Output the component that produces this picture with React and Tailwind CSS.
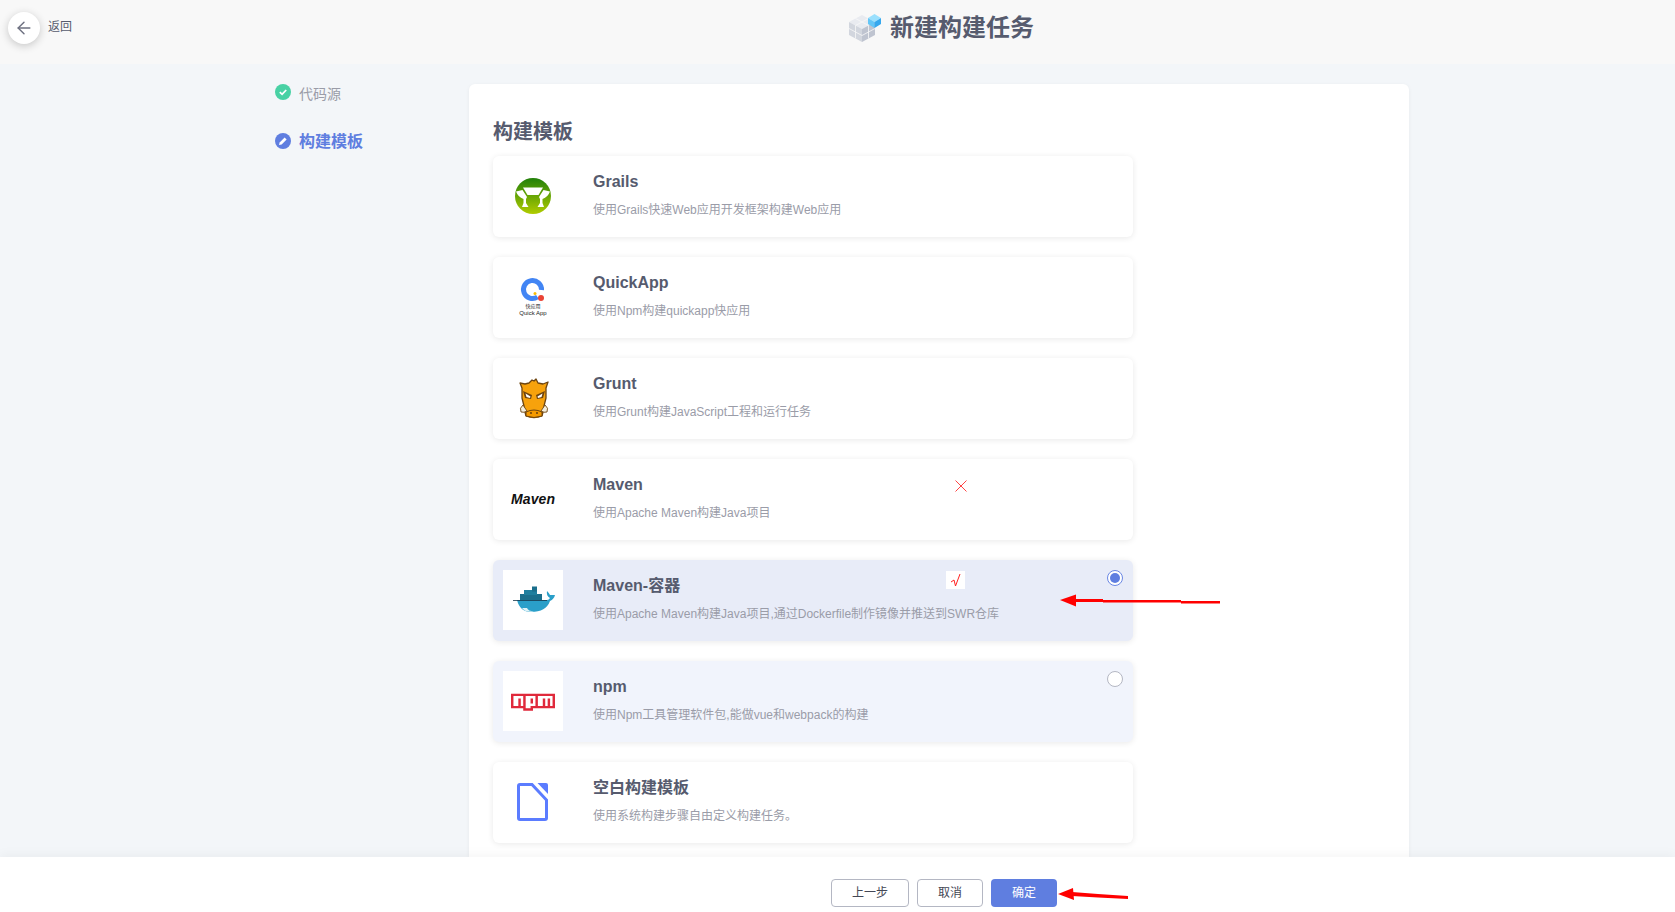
import React from "react";
import { ArrowLeft } from "lucide-react";
import { FaNpm } from "react-icons/fa";

const FONT = { fontFamily: '"Liberation Sans", "Noto Sans CJK SC", sans-serif' };

function CubeLogo() {
  return (
    <svg width="33" height="28" viewBox="0 0 33 28">
      <polygon points="0,8 13,1 26,8 13,15" fill="#e9ebf0" />
      <polygon points="0,8 13,15 13,28 0,21" fill="#d2d6de" />
      <polygon points="13,15 26,8 26,21 13,28" fill="#bfc4d0" />
      <path d="M0 14.5 L13 21.5 L26 14.5 M6.5 11.5 V24.5 M19.5 11.5 V24.5 M6.5 4.5 L19.5 11.5 M19.5 4.5 L6.5 11.5" fill="none" stroke="#f8f8f8" strokeWidth="0.8" />
      <polygon points="19,4 25.5,0 32,4 25.5,8" fill="#9be0fd" />
      <polygon points="19,4 25.5,8 25.5,14 19,10" fill="#63c6f7" />
      <polygon points="25.5,8 32,4 32,10 25.5,14" fill="#36a8ee" />
    </svg>
  );
}

function GrailsLogo() {
  return (
    <svg width="60" height="60" viewBox="0 0 60 60">
      <defs>
        <linearGradient id="grails" x1="0" y1="0" x2="0" y2="1">
          <stop offset="0" stopColor="#21800a" />
          <stop offset="1" stopColor="#b0cc00" />
        </linearGradient>
      </defs>
      <circle cx="30" cy="30" r="18" fill="url(#grails)" />
      <path d="M20 21.5 H40 L35.5 29 H24.5Z" fill="#fff" />
      <path d="M13 25.5 L19.5 24 L24 31 L23 33 V37 L25.5 41 H19 L20.5 37 V33 Q15 31 13 25.5Z" fill="#fff" />
      <path d="M47 25.5 L40.5 24 L36 31 L37 33 V37 L34.5 41 H41 L39.5 37 V33 Q45 31 47 25.5Z" fill="#fff" />
      <path d="M29 30 H31 V36 L33 40 H27 L29 36Z" fill="#fff" opacity="0" />
    </svg>
  );
}

function QuickAppLogo() {
  return (
    <svg width="60" height="60" viewBox="0 0 60 60">
      <path d="M34.5 30 A9 9 0 1 1 38.5 23" fill="none" stroke="#4285f4" strokeWidth="5" />
      <circle cx="38" cy="31" r="3" fill="#ea4335" />
      <circle cx="32" cy="26.5" r="1.5" fill="#fbbc05" />
      <text x="30" y="41" textAnchor="middle" fontSize="5" fill="#222" style={FONT}>快应用</text>
      <text x="30" y="47.5" textAnchor="middle" fontSize="6" fill="#222" style={FONT}>Quick App</text>
    </svg>
  );
}

function GruntLogo() {
  return (
    <svg width="60" height="60" viewBox="0 0 60 60">
      <path d="M17 15 L22 16 L26 15 L29 12 L31 13 L33 11 L35 15 L40 16 L45 14 L43 20 L43 30 L41 38 L40 44 L39 48 Q31 51 23 48 L22 44 L21 38 L19 30 L19 20Z" fill="#f7a20c" stroke="#6e4510" strokeWidth="1.3" strokeLinejoin="round" />
      <path d="M20 23 L29 27 L28 31 L22 30Z" fill="#6e4510" />
      <path d="M42 23 L33 27 L34 31 L40 30Z" fill="#6e4510" />
      <path d="M22.5 25.5 L27.5 28.5 L27 30 L23.5 29Z" fill="#fff" />
      <path d="M39.5 25.5 L34.5 28.5 L35 30 L38.5 29Z" fill="#fff" />
      <path d="M20 37 Q16 40 18 44 Q21 45 24 43 L22 40Z" fill="#f4eedd" stroke="#6e4510" strokeWidth="0.9" />
      <path d="M42 37 Q46 40 44 44 Q41 45 38 43 L40 40Z" fill="#f4eedd" stroke="#6e4510" strokeWidth="0.9" />
      <path d="M23 44 Q31 40 39 44 L39 48 Q31 51 23 48Z" fill="#f59a00" stroke="#6e4510" strokeWidth="1" />
      <circle cx="28" cy="45" r="0.9" fill="#5a370c" />
      <circle cx="34" cy="45" r="0.9" fill="#5a370c" />
    </svg>
  );
}

function MavenLogo() {
  return (
    <svg width="60" height="60" viewBox="0 0 60 60">
      <text x="8" y="35" textLength="44" lengthAdjust="spacing" fontSize="14" fontWeight="700" fontStyle="italic" fill="#111" style={FONT}>Maven</text>
    </svg>
  );
}

function DockerLogo() {
  return (
    <svg width="60" height="60" viewBox="0 0 60 60">
      <rect x="17" y="24" width="22" height="6" fill="#1b6f8c" />
      <rect x="21" y="20" width="13" height="5" fill="#1f7f9e" />
      <rect x="29" y="16.5" width="5" height="5" fill="#1b6f8c" />
      <path d="M14 30 H44 Q46 30 47 28 Q43 26 44 21 Q46 23 47 25 L52 25 Q51 29 47 31 Q43 42 28 42 Q17 42 14 30Z" fill="#2a9fc9" />
      <path d="M19 38 Q23 43 31 41.5 Q25 41 24 38Z" fill="#dff2f7" />
      <path d="M10 30.5 H44" stroke="#17374a" strokeWidth="0.8" />
    </svg>
  );
}

function NpmLogo() {
  return <FaNpm className="w-[44px] h-[44px] text-[#e0293b]" />;
}

function BlankLogo() {
  return (
    <svg width="60" height="60" viewBox="0 0 60 60">
      <path d="M17 12.5 H29 L43.5 28 V46 Q43.5 47.5 42 47.5 H17 Q15.5 47.5 15.5 46 V14 Q15.5 12.5 17 12.5Z" fill="#fff" stroke="#5b7cff" strokeWidth="3" />
      <path d="M34.5 11 H43 Q45 11 45 13 V22Z" fill="#5b7cff" />
    </svg>
  );
}

const templates = [
  { name: "Grails", desc: "使用Grails快速Web应用开发框架构建Web应用", logo: GrailsLogo },
  { name: "QuickApp", desc: "使用Npm构建quickapp快应用", logo: QuickAppLogo },
  { name: "Grunt", desc: "使用Grunt构建JavaScript工程和运行任务", logo: GruntLogo },
  { name: "Maven", desc: "使用Apache Maven构建Java项目", logo: MavenLogo },
  { name: "Maven-容器", desc: "使用Apache Maven构建Java项目,通过Dockerfile制作镜像并推送到SWR仓库", logo: DockerLogo, state: "selected" },
  { name: "npm", desc: "使用Npm工具管理软件包,能做vue和webpack的构建", logo: NpmLogo, state: "hover" },
  { name: "空白构建模板", desc: "使用系统构建步骤自由定义构建任务。", logo: BlankLogo },
];

function TemplateCard({ item }) {
  const Logo = item.logo;
  const active = item.state === "selected" || item.state === "hover";
  const bg = item.state === "selected" ? "bg-[#e8ecf8]" : item.state === "hover" ? "bg-[#f1f4fc]" : "bg-white";
  return (
    <div className={`flex items-start w-[640px] h-[81px] p-[10px] rounded-md shadow-[0_1px_6px_rgba(0,0,0,0.09)] ${bg}`}>
      <div className={`flex items-center justify-center w-[60px] h-[60px] shrink-0 ${active ? "bg-white" : ""}`}>
        <Logo />
      </div>
      <div className="ml-[30px] pt-[4px]">
        <div className="text-base font-bold leading-6 text-[#565b6e]">{item.name}</div>
        <div className="mt-[6px] text-xs leading-5 text-[#9a9ca8]">{item.desc}</div>
      </div>
      {active && (
        <div className="ml-auto flex items-center justify-center w-4 h-4 rounded-full">
          {item.state === "selected" ? (
            <div className="flex items-center justify-center w-4 h-4 rounded-full border border-[#6a87e4] bg-white">
              <div className="w-[10px] h-[10px] rounded-full bg-[#5f7ee0]" />
            </div>
          ) : (
            <div className="w-4 h-4 rounded-full border border-[#b4b7c3] bg-white" />
          )}
        </div>
      )}
    </div>
  );
}

export default function App() {
  return (
    <div className="relative flex flex-col h-screen overflow-hidden bg-[#f3f6f9]" style={FONT}>
      {/* Header */}
      <header className="relative flex items-start h-16 shrink-0 pt-3 bg-[#f8f8f8]">
        <div className="flex items-start pl-2">
          <div className="flex items-center justify-center w-8 h-8 rounded-full bg-white shadow-[0_2px_8px_rgba(0,0,0,0.2)]">
            <ArrowLeft className="w-5 h-5 text-[#6d7080]" strokeWidth={1.7} />
          </div>
          <span className="ml-2 mt-[7px] text-xs leading-4 text-[#565b6e]">返回</span>
        </div>
        <div className="absolute left-[849px] top-[12px] flex items-center gap-2">
          <CubeLogo />
          <h1 className="text-2xl font-bold leading-8 text-[#565b6e]">新建构建任务</h1>
        </div>
      </header>

      {/* Steps + template list */}
      <main className="flex flex-1 min-h-0 pt-5">
        <aside className="w-[469px] shrink-0 pl-[275px] -mt-[2px]">
          <div className="flex items-center gap-2 h-5">
            <svg width="16" height="16" viewBox="0 0 16 16">
              <circle cx="8" cy="8" r="8" fill="#48d1a4" />
              <path d="M4.8 8.2 L7.1 10.3 L11.2 6" fill="none" stroke="#fff" strokeWidth="1.8" />
            </svg>
            <span className="text-sm text-[#9a9ca8] pt-[3px]">代码源</span>
          </div>
          <div className="flex items-center gap-2 h-6 mt-[27px]">
            <svg width="16" height="16" viewBox="0 0 16 16">
              <circle cx="8" cy="8" r="8" fill="#5f7ee0" />
              <path d="M4 12 L4.6 9.4 L9.6 4.4 L11.6 6.4 L6.6 11.4Z" fill="#fff" />
            </svg>
            <span className="text-base font-bold text-[#5f7ee0] pt-[1px]">构建模板</span>
          </div>
        </aside>
        <section className="w-[940px] shrink-0 px-6 pt-[34px] bg-white rounded-t-md shadow-[0_1px_4px_rgba(0,0,0,0.05)]">
          <h2 className="text-xl font-bold leading-7 mb-[10px] text-[#565b6e]">构建模板</h2>
          <div className="flex flex-col gap-5">
            {templates.map((item) => (
              <TemplateCard key={item.name} item={item} />
            ))}
          </div>
        </section>
      </main>

      {/* Footer */}
      <footer className="relative flex items-start gap-2 h-[55px] shrink-0 pl-[831px] pt-[22px] bg-white shadow-[0_-3px_10px_rgba(0,0,0,0.04)]">
        <button className="w-[78px] h-7 text-xs text-[#444755] bg-white border border-[#b4b7c3] rounded-sm">上一步</button>
        <button className="w-[66px] h-7 text-xs text-[#444755] bg-white border border-[#b4b7c3] rounded-sm">取消</button>
        <button className="w-[66px] h-7 text-xs text-white bg-[#5f7ee0] rounded-sm">确定</button>
      </footer>

      {/* Red annotations drawn over the screenshot */}
      <svg className="absolute left-[955px] top-[480px]" width="12" height="12" viewBox="0 0 12 12">
        <path d="M0.5 0.5 L11.5 11.5 M11.5 0.5 L0.5 11.5" stroke="#f44" strokeWidth="1" />
      </svg>
      <div className="absolute left-[946px] top-[571px] flex items-center justify-center w-[19px] h-[18px] bg-white">
        <svg width="12" height="14" viewBox="0 0 12 14">
          <path d="M1 9 L4 7 L5.5 13 L10 1" fill="none" stroke="#f22" strokeWidth="1" />
        </svg>
      </div>
      <svg className="absolute left-[1060px] top-[592px]" width="162" height="18" viewBox="0 0 162 18">
        <path d="M0 8 L16 2.5 L16 14.5Z" fill="#f00" />
        <path d="M16 7 H43 V8 H121 V9 H160 V11.5 H121 V10.5 H43 V10 H16Z" fill="#f00" />
      </svg>
      <svg className="absolute left-[1058px] top-[886px]" width="72" height="16" viewBox="0 0 72 16">
        <path d="M0 8 L15 2 L16 14Z" fill="#f00" />
        <path d="M14 6 L40 8 L70 10 V13 L40 11.5 L14 10Z" fill="#f00" />
      </svg>
    </div>
  );
}
